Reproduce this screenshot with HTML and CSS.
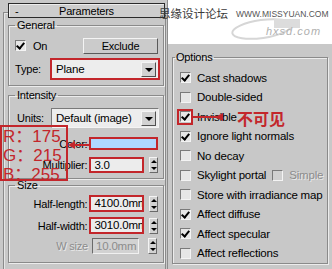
FILE: index.html
```html
<!DOCTYPE html>
<html lang="en">
<head>
    <meta charset="UTF-8">
    <title>Parameters</title>
    <link rel="stylesheet" href="styles.css">
</head>
<body>
<div class="screen">

    <!-- Left rollout: Parameters -->
    <div class="rollout">
        <div class="frame">
            <div class="head"><span class="minus">-</span><span class="title">Parameters</span></div>

            <fieldset class="group general">
                <legend>General</legend>
                <div class="row row-on">
                    <span class="check on"></span><span class="check-text">On</span>
                    <div class="btn">Exclude</div>
                </div>
                <div class="row row-type">
                    <span>Type:</span>
                    <div class="combo red">Plane<span class="drop"></span></div>
                </div>
            </fieldset>

            <fieldset class="group intensity">
                <legend>Intensity</legend>
                <div class="row row-units">
                    <span class="units-lbl">Units:</span>
                    <div class="combo plain">Default (image)<span class="drop"></span></div>
                </div>
                <div class="row row-color">
                    <span class="field-lbl">Color:</span>
                    <div class="swatch"></div>
                </div>
                <div class="row row-mult">
                    <span class="field-lbl">Multiplier:</span>
                    <div class="num red mult">3.0</div>
                    <span class="spin"></span>
                </div>
            </fieldset>

            <fieldset class="group size">
                <legend>Size</legend>
                <div class="row row-len">
                    <span class="field-lbl">Half-length:</span>
                    <div class="num red">4100.0mm</div>
                    <span class="spin"></span>
                </div>
                <div class="row row-wid">
                    <span class="field-lbl">Half-width:</span>
                    <div class="num red">3010.0mm</div>
                    <span class="spin"></span>
                </div>
                <div class="row row-w">
                    <span class="field-lbl off">W size</span>
                    <div class="num off">10.0mm</div>
                    <span class="spin"></span>
                </div>
            </fieldset>
        </div>
    </div>

    <!-- Right column: watermark + options -->
    <div class="side">
        <div class="mark"></div>
        <div class="panel">
            <fieldset class="group options">
                <legend>Options</legend>
                <div class="opt"><span class="check on"></span><span class="check-text">Cast shadows</span></div>
                <div class="opt"><span class="check"></span><span class="check-text">Double-sided</span></div>
                <div class="opt"><span class="check on"></span><span class="check-text">Invisible</span></div>
                <div class="opt"><span class="check on"></span><span class="check-text">Ignore light normals</span></div>
                <div class="opt"><span class="check"></span><span class="check-text">No decay</span></div>
                <div class="opt skylight">
                    <span class="check"></span><span class="check-text">Skylight portal</span>
                    <span class="check off"></span><span class="check-text off">Simple</span>
                </div>
                <div class="opt"><span class="check"></span><span class="check-text">Store with irradiance map</span></div>
                <div class="opt"><span class="check on"></span><span class="check-text">Affect diffuse</span></div>
                <div class="opt"><span class="check on"></span><span class="check-text">Affect specular</span></div>
                <div class="opt"><span class="check"></span><span class="check-text">Affect reflections</span></div>
            </fieldset>
        </div>
    </div>

    <!-- Watermark over the top edge -->
    <div class="wm-cn">思缘设计论坛</div>
    <div class="wm-url">WWW.MISSYUAN.COM</div>
    <svg class="wm-logo" width="80" height="26" viewBox="0 0 80 26">
        <ellipse cx="34" cy="13" rx="30" ry="9" fill="none" stroke="#d6d6d6" stroke-width="2" transform="rotate(-8 34 13)"/>
        <rect x="46" y="3" width="26" height="9" fill="#dcdcdc"/>
    </svg>
    <div class="wm-site">hxsd.com</div>

    <!-- Red notes drawn over the screenshot -->
    <div class="rgb-note">R：175<br>G：215<br>B：255</div>
    <svg class="color-arrow" width="22" height="10" viewBox="0 0 22 10">
        <line x1="5" y1="5" x2="22" y2="5" stroke="#c3262b" stroke-width="2"/>
        <path d="M0 5L7 1V9z" fill="#c3262b"/>
    </svg>
    <div class="inv-box"></div>
    <svg class="inv-arrow" width="30" height="10" viewBox="0 0 30 10">
        <line x1="0" y1="5" x2="24" y2="5" stroke="#c3262b" stroke-width="2"/>
        <path d="M22 5L30 1V9z" fill="#c3262b"/>
    </svg>
    <div class="inv-note">不可见</div>
</div>
</body>
</html>
```

FILE: styles.css
```css
* {
    box-sizing: border-box;
}

body {
    margin: 0;
    font-family: "Liberation Sans", Arial, sans-serif;
    font-size: 11px;
    letter-spacing: -0.2px;
    color: #000;
    background: #fff;
}

.screen {
    width: 332px;
    height: 269px;
    display: flex;
    overflow: hidden;
    position: relative;
}

/* ---------- left rollout ---------- */

.rollout {
    width: 168px;
    height: 269px;
    background: #c8c8c8;
    border-right: 1px solid #8c8c8c;
    padding: 12px 1px 0 3px;
}

.frame {
    height: 100%;
    border: 1px solid #8a8a8a;
    border-bottom: none;
    box-shadow: inset 1px 1px 0 #e6e6e6;
    padding: 0 0 0 4px;
}

.head {
    height: 15px;
    margin-top: -10px;
    width: 157px;
    border: 1px solid #2a2a2a;
    background: #cdcdcd;
    box-shadow: inset 1px 1px 0 #ececec;
    display: flex;
    align-items: center;
    padding-left: 6px;
}

.minus {
    width: 0;
    overflow: visible;
}

.title {
    flex: 1;
    text-align: center;
    margin-right: 6px;
}

.group {
    width: 156px;
    min-width: 0;
    margin: 0;
    border: 1px solid #8a8a8a;
    box-shadow: 1px 1px 0 #ececec, inset 1px 1px 0 #ececec;
    padding: 0 5px 0 6px;
}

.group legend {
    padding: 0 2px;
    height: 12px;
    line-height: 12px;
}

.row {
    display: flex;
    align-items: center;
}

.general {
    margin-top: 1px;
    padding-bottom: 5px;
}

.row-on {
    margin-top: 6px;
    height: 17px;
}

.row-on .check-text {
    margin-left: 7px;
}

.btn {
    margin-left: auto;
    width: 75px;
    height: 16px;
    line-height: 14px;
    text-align: center;
    background: #cbcbcb;
    border: 1px solid;
    border-color: #f4f4f4 #5a5a5a #5a5a5a #f4f4f4;
}

.row-type {
    margin-top: 4px;
    height: 22px;
}

.combo {
    margin-left: auto;
    display: flex;
    align-items: center;
    background: #ededed;
    padding-left: 4px;
}

.combo.red {
    width: 110px;
    height: 22px;
    margin-right: -2px;
    border: 2px solid #c3262b;
    font-size: 11.5px;
}

.combo.plain {
    width: 108px;
    height: 20px;
    margin-right: -1px;
    border: 1px solid;
    border-color: #7a7a7a #f4f4f4 #f4f4f4 #7a7a7a;
    font-size: 11.5px;
}

.drop {
    margin-left: auto;
    margin-right: 2px;
    width: 15px;
    height: 15px;
    background: #d2d2d2;
    border: 1px solid;
    border-color: #f4f4f4 #505050 #505050 #f4f4f4;
    display: flex;
    align-items: center;
    justify-content: center;
}

.drop::after {
    content: "";
    border-left: 4px solid transparent;
    border-right: 4px solid transparent;
    border-top: 4px solid #000;
    margin-top: 1px;
}

.intensity {
    margin-top: 3px;
    padding-bottom: 5px;
}

.units-lbl {
    margin-left: 2px;
}

.row-units {
    margin-top: 7px;
    height: 20px;
}

.field-lbl {
    width: 75px;
    text-align: right;
    padding-right: 2px;
}

.field-lbl.off {
    color: #8c8c8c;
    text-shadow: 1px 1px 0 #e8e8e8;
}

.row-color {
    margin-top: 9px;
    height: 13px;
}

.swatch {
    width: 69px;
    height: 13px;
    background: #afd7ff;
    border: 2px solid #c3262b;
}

.row-mult {
    margin-top: 7px;
    height: 16px;
}

.num {
    width: 55px;
    height: 17px;
    line-height: 13px;
    padding-left: 3px;
    overflow: hidden;
    white-space: nowrap;
    background: #ececec;
    font-size: 11.5px;
}

.num.red {
    border: 2px solid #c3262b;
}

.num.mult {
    height: 16px;
    line-height: 12px;
}

.num.off {
    width: 47px;
    height: 16px;
    margin-left: 2px;
    margin-right: 4px;
    border: 1px solid;
    border-color: #6a6a6a #f0f0f0 #f0f0f0 #6a6a6a;
    background: #d2d2d2;
    color: #8c8c8c;
    line-height: 14px;
}

.spin {
    margin-left: 5px;
    width: 9px;
    height: 16px;
    display: flex;
    flex-direction: column;
    justify-content: space-around;
    align-items: center;
    background: #d2d2d2;
    border: 1px solid;
    border-color: #f4f4f4 #6a6a6a #6a6a6a #f4f4f4;
}

.spin::before,
.spin::after {
    content: "";
    border-left: 3px solid transparent;
    border-right: 3px solid transparent;
}

.spin::before {
    border-bottom: 3px solid #000;
}

.spin::after {
    border-top: 3px solid #000;
}

.size {
    padding-bottom: 8px;
}

.row-len {
    margin-top: 4px;
    height: 17px;
}

.row-wid {
    margin-top: 5px;
    height: 17px;
}

.row-w {
    margin-top: 4px;
    height: 16px;
}

/* ---------- checkboxes ---------- */

.check {
    flex: none;
    width: 11px;
    height: 11px;
    border: 1px solid;
    border-color: #7a7a7a #f4f4f4 #f4f4f4 #7a7a7a;
    background: #e6e6e6;
    position: relative;
}

.check.on::after {
    content: "";
    position: absolute;
    left: 2px;
    top: 0;
    width: 3px;
    height: 6px;
    border-right: 2px solid #000;
    border-bottom: 2px solid #000;
    transform: rotate(40deg);
}

.check.off {
    background: #d0d0d0;
}

.check-text.off {
    color: #8c8c8c;
    text-shadow: 1px 1px 0 #e8e8e8;
}

/* ---------- right column ---------- */

.side {
    flex: 1;
    display: flex;
    flex-direction: column;
}

.mark {
    height: 44px;
    background: #fff;
}

.panel {
    flex: 1;
    background: #c8c8c8;
    padding: 7px 0 0 4px;
}

.options {
    padding: 5px 0 0 2px;
}

.options legend {
    padding: 0 1px;
}

.opt {
    height: 19.5px;
    padding-left: 5px;
    display: flex;
    align-items: center;
    gap: 6px;
    font-size: 11.5px;
}

.skylight .check-text:first-of-type {
    width: 69px;
}

/* ---------- watermark ---------- */

.wm-cn {
    position: absolute;
    left: 159px;
    top: 5px;
    font-family: "Noto Sans CJK SC", sans-serif;
    font-size: 11.5px;
    letter-spacing: 0;
    color: #3a3a3a;
}

.wm-url {
    position: absolute;
    left: 236px;
    top: 9px;
    font-size: 8.5px;
    letter-spacing: 0;
    color: #555;
}

.wm-logo {
    position: absolute;
    left: 228px;
    top: 16px;
}

.wm-site {
    position: absolute;
    left: 266px;
    top: 25px;
    font-size: 11px;
    font-style: italic;
    letter-spacing: 1px;
    color: #b0b0b0;
}

/* ---------- red notes ---------- */

.rgb-note {
    position: absolute;
    left: 0;
    top: 125px;
    width: 68px;
    height: 56px;
    border: 2px solid #c3262b;
    padding-left: 1px;
    font-family: "Liberation Sans", "Noto Sans CJK SC", sans-serif;
    font-size: 17px;
    line-height: 19px;
    letter-spacing: 0;
    color: #c3262b;
}

.color-arrow {
    position: absolute;
    left: 68px;
    top: 140px;
}

.inv-box {
    position: absolute;
    left: 177px;
    top: 109px;
    width: 16px;
    height: 16px;
    border: 2px solid #c3262b;
}

.inv-arrow {
    position: absolute;
    left: 193px;
    top: 112px;
}

.inv-note {
    position: absolute;
    left: 237px;
    top: 106px;
    font-family: "Noto Sans CJK SC", sans-serif;
    font-size: 16px;
    font-weight: bold;
    letter-spacing: 0;
    color: #c3262b;
}
```
